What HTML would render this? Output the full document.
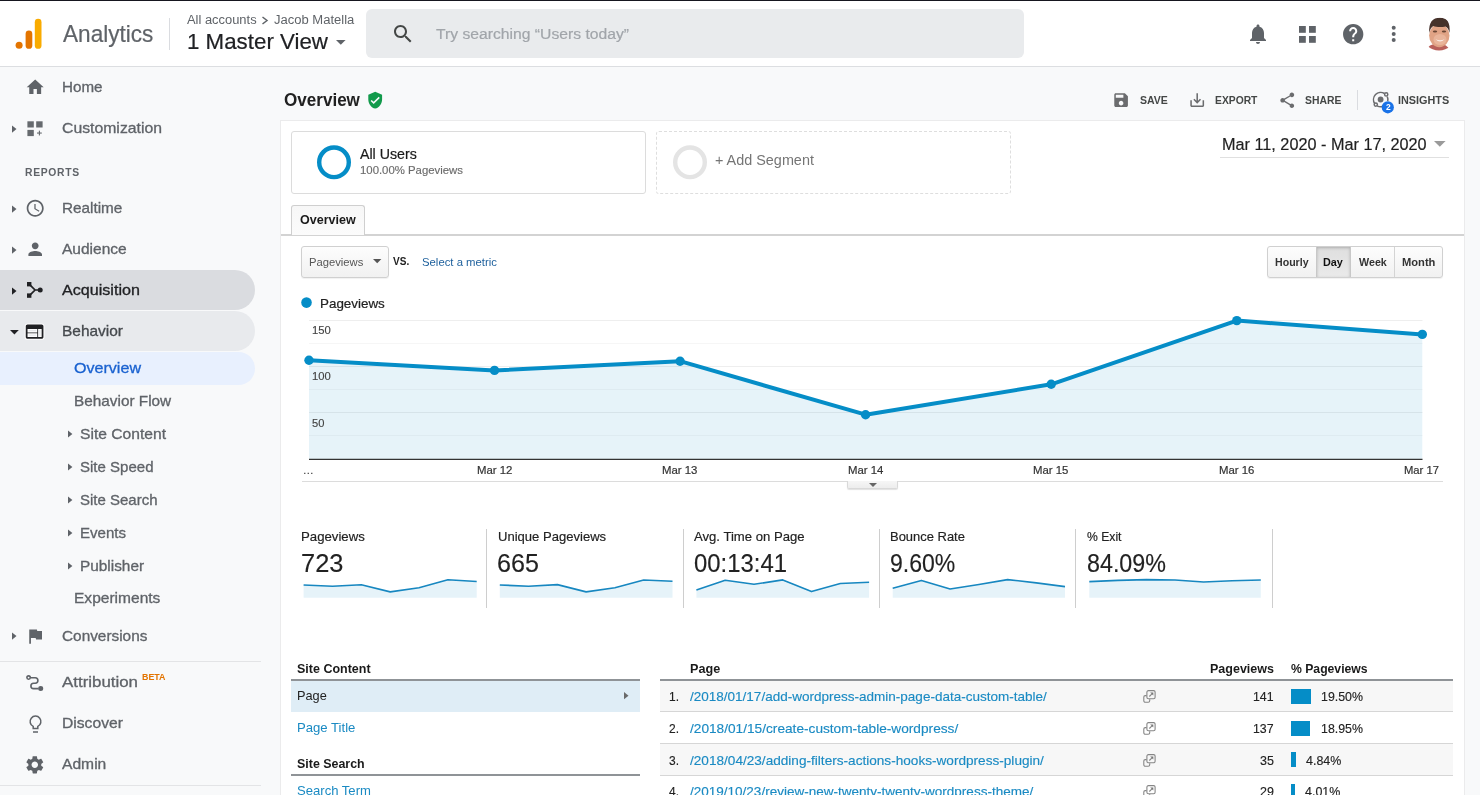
<!DOCTYPE html>
<html lang="en"><head><meta charset="utf-8"><title>Analytics - Behavior Overview</title>
<style>
*{box-sizing:border-box;margin:0;padding:0}
html,body{width:1480px;height:795px;overflow:hidden;background:#f8f9fa;font-family:"Liberation Sans",Arial,sans-serif}
body{position:relative}
.abs,.t,svg.i{position:absolute}
.t{white-space:nowrap;line-height:1;transform-origin:0 50%;display:block}
svg.i{display:block;overflow:visible}
#topline{left:0;top:0;width:1480px;height:1px;background:#16161f}
#header{left:0;top:1px;width:1480px;height:66px;background:#fff;border-bottom:1px solid #dcdee1}
#search{left:366px;top:8px;width:658px;height:49px;background:#e9ebed;border-radius:6px}
#sidebar{left:0;top:67px;width:262px;height:728px;background:#f8f9fa}
.pill{left:0;width:255px;border-radius:0 20px 20px 0}
.hr{height:1px;background:#e3e4e6}
#card{left:280px;top:120px;width:1185px;height:700px;background:#fff;border:1px solid #ebebec}
</style></head><body>

<div class="abs" id="topline"></div>
<header>
<div class="abs" id="header">
<svg class="i" style="left:14px;top:16px" width="30" height="34" viewBox="14 17 30 34">
<rect x="34.8" y="18.8" width="6.7" height="30" rx="3.35" fill="#f9ab00"/>
<rect x="25.6" y="30.6" width="6.7" height="18.2" rx="3.35" fill="#e37400"/>
<circle cx="19.1" cy="45.3" r="3.5" fill="#e37400"/></svg>
<div class="abs" style="left:169px;top:17px;width:1px;height:32px;background:#dadce0"></div>
<div class="abs" id="search"></div>
</div>
<span class="t " style="left:62.60px;top:23.00px;font-size:23.7px;color:#5f6368;-webkit-text-stroke:0.2px #5f6368;transform:scaleX(0.9536);">Analytics</span>
<span class="t " style="left:186.60px;top:14.00px;font-size:12.3px;color:#5f6368;transform:scaleX(1.0496);">All accounts</span>
<span class="t " style="left:273.50px;top:14.00px;font-size:12.3px;color:#5f6368;transform:scaleX(1.0583);">Jacob Matella</span>
<svg class="i" style="left:261px;top:15.5px" width="8" height="9" viewBox="0 0 8 9"><path d="M1.5 1 L6 4.5 L1.5 8" fill="none" stroke="#5f6368" stroke-width="1.5"/></svg>
<span class="t " style="left:186.50px;top:31.00px;font-size:21.8px;color:#202124;-webkit-text-stroke:0.2px #202124;transform:scaleX(1.0239);">1 Master View</span>
<svg class="i" style="left:335.6px;top:40px" width="9.6" height="4.8" viewBox="0 0 10 5"><path d="M0 0h10L5 5z" fill="#5f6368"/></svg>
<svg class="i" style="left:390.5px;top:22px" width="24" height="24" viewBox="0 0 24 24"><path fill="#444746" d="M15.5 14h-.79l-.28-.27C15.41 12.59 16 11.11 16 9.5 16 5.91 13.09 3 9.5 3S3 5.91 3 9.5 5.91 16 9.5 16c1.61 0 3.09-.59 4.23-1.57l.27.28v.79l5 4.99L20.49 19l-4.99-5zm-6 0C7.01 14 5 11.99 5 9.5S7.01 5 9.5 5 14 7.01 14 9.5 11.99 14 9.5 14z"/></svg>
<span class="t " style="left:435.50px;top:26.00px;font-size:15.2px;color:#a1a5aa;-webkit-text-stroke:0.2px #a1a5aa;transform:scaleX(1.0331);">Try searching “Users today”</span>
<svg class="i" style="left:1246px;top:22px" width="24" height="24" viewBox="0 0 24 24"><path fill="#5f6368" d="M12 22c1.1 0 2-.9 2-2h-4c0 1.1.89 2 2 2zm6-6v-5c0-3.07-1.64-5.64-4.5-6.32V4c0-.83-.67-1.5-1.5-1.5s-1.5.67-1.5 1.5v.68C7.63 5.36 6 7.92 6 11v5l-2 2v1h16v-1l-2-2z"/></svg>
<svg class="i" style="left:1299px;top:26.2px" width="17" height="17" viewBox="0 0 17 17"><g fill="#5f6368"><rect x="0" y="0" width="6.8" height="6.8"/><rect x="10" y="0" width="6.8" height="6.8"/><rect x="0" y="10" width="6.8" height="6.8"/><rect x="10" y="10" width="6.8" height="6.8"/></g></svg>
<svg class="i" style="left:1340.5px;top:21.7px" width="24.4" height="24.4" viewBox="0 0 24 24"><path fill="#5f6368" d="M12 2C6.48 2 2 6.48 2 12s4.480 10 10 10 10-4.480 10-10S17.520 2 12 2zm1 17h-2v-2h2v2zm2.070-7.750l-.9.920C13.450 12.900 13 13.500 13 15h-2v-.5c0-1.100.450-2.100 1.170-2.830l1.240-1.260c.370-.360.590-.860.590-1.410 0-1.100-.9-2-2-2s-2 .9-2 2H8c0-2.210 1.790-4 4-4s4 1.790 4 4c0 .880-.360 1.680-.930 2.250z"/></svg>
<svg class="i" style="left:1391px;top:25px" width="6" height="18" viewBox="0 0 6 18"><g fill="#5f6368"><circle cx="2.7" cy="2.8" r="2"/><circle cx="2.7" cy="8.9" r="2"/><circle cx="2.7" cy="15" r="2"/></g></svg>
<svg class="i" style="left:1421px;top:12px" width="38" height="44" viewBox="1421 12 38 44">
<defs><filter id="bl" x="-20%" y="-20%" width="140%" height="140%"><feGaussianBlur stdDeviation="0.55"/></filter>
<clipPath id="avc"><circle cx="1439" cy="34" r="16.5"/></clipPath></defs>
<g filter="url(#bl)" clip-path="url(#avc)">
<ellipse cx="1438" cy="50.5" rx="11.2" ry="7" fill="#b9605a"/>
<ellipse cx="1439.3" cy="35.6" rx="10.2" ry="11.6" fill="#e0a385"/>
<ellipse cx="1440" cy="39.5" rx="6.5" ry="5.5" fill="#e9b59b"/>
<path d="M1429.2 33 C1428.6 22 1432.500 17.700 1440 17.700 C1447.200 17.700 1450.400 22 1449.600 33 C1448.800 29.500 1447.800 27.600 1445.500 26.400 C1441.500 27.400 1436.500 27.200 1433.300 26 C1431 27.500 1430 29.500 1429.200 33z" fill="#45302a"/>
<ellipse cx="1435" cy="31.600" rx="2.2" ry="1" fill="#6a4636"/><ellipse cx="1444" cy="31.600" rx="2.2" ry="1" fill="#6a4636"/>
<path d="M1435.600 39.200 Q1440 43.800 1444.600 39.200 Q1440 41.200 1435.600 39.200z" fill="#fbeee8"/>
</g></svg>
</header>
<nav>
<div class="abs" id="sidebar"></div>
<div class="abs pill" style="top:270.3px;height:40.2px;background:#dadce0"></div>
<div class="abs pill" style="top:310.8px;height:40.5px;background:#e8eaed"></div>
<div class="abs pill" style="top:352px;height:33px;border-radius:0 16.5px 16.5px 0;background:#e8f0fe"></div>
<div class="abs hr" style="left:0;top:661px;width:261px"></div>
<div class="abs hr" style="left:0;top:785px;width:261px"></div>
<svg class="i" style="left:24.7px;top:76.8px" width="20.4" height="20.4" viewBox="0 0 24 24"><path fill="#5f6368" d="M10 20v-6h4v6h5v-8h3L12 3 2 12h3v8z"/></svg>
<span class="t " style="left:61.80px;top:80.00px;font-size:14.4px;color:#5f6368;-webkit-text-stroke:0.3px #5f6368;transform:scaleX(1.0549);">Home</span>
<svg class="i" style="left:12.3px;top:124.5px" width="4.5" height="8.2" viewBox="0 0 5 8"><path d="M0 0L5 4L0 8z" fill="#5f6368"/></svg>
<svg class="i" style="left:27px;top:120.8px" width="16" height="16" viewBox="0 0 16 16"><g fill="#666a6e"><rect x=".4" y=".3" width="6.400" height="6.2"/><rect x="9.2" y=".3" width="6.400" height="6.200"/><rect x=".4" y="8.900" width="6.400" height="6.200"/><rect x="10" y="11.500" width="4.800" height="1.100"/><rect x="11.850" y="9.650" width="1.100" height="4.800"/></g></svg>
<span class="t " style="left:61.80px;top:121.00px;font-size:14.4px;color:#5f6368;-webkit-text-stroke:0.3px #5f6368;transform:scaleX(1.0966);">Customization</span>
<span class="t " style="left:24.60px;top:167.00px;font-size:10.8px;color:#5f6368;font-weight:700;letter-spacing:0.7px;transform:scaleX(0.9581);">REPORTS</span>
<svg class="i" style="left:12.3px;top:204.5px" width="4.5" height="8.2" viewBox="0 0 5 8"><path d="M0 0L5 4L0 8z" fill="#5f6368"/></svg>
<svg class="i" style="left:24.9px;top:197.9px" width="20.4" height="20.4" viewBox="0 0 24 24"><path fill="#5f6368" d="M11.99 2C6.47 2 2 6.48 2 12s4.47 10 9.99 10C17.52 22 22 17.52 22 12S17.52 2 11.99 2zM12 20c-4.42 0-8-3.580-8-8s3.580-8 8-8 8 3.580 8 8-3.580 8-8 8zm.5-13H11v6l5.250 3.150.75-1.230-4.5-2.670z"/></svg>
<span class="t " style="left:61.80px;top:201.00px;font-size:14.4px;color:#5f6368;-webkit-text-stroke:0.3px #5f6368;transform:scaleX(1.0634);">Realtime</span>
<svg class="i" style="left:12.3px;top:245.5px" width="4.5" height="8.2" viewBox="0 0 5 8"><path d="M0 0L5 4L0 8z" fill="#5f6368"/></svg>
<svg class="i" style="left:24.7px;top:239.3px" width="20.4" height="20.4" viewBox="0 0 24 24"><path fill="#5f6368" d="M12 12c2.210 0 4-1.790 4-4s-1.790-4-4-4-4 1.790-4 4 1.790 4 4 4zm0 2c-2.670 0-8 1.340-8 4v2h16v-2c0-2.660-5.330-4-8-4z"/></svg>
<span class="t " style="left:61.80px;top:242.00px;font-size:14.4px;color:#5f6368;-webkit-text-stroke:0.3px #5f6368;transform:scaleX(1.0781);">Audience</span>
<svg class="i" style="left:12.3px;top:286.5px" width="4.5" height="8.2" viewBox="0 0 5 8"><path d="M0 0L5 4L0 8z" fill="#202124"/></svg>
<svg class="i" style="left:27px;top:282.3px" width="16" height="16" viewBox="0 0 16 16"><g fill="#202124" stroke="none">
<rect x="0" y="0" width="4.4" height="4.4"/><rect x="0" y="11.4" width="4.4" height="4.400"/><circle cx="13.2" cy="8" r="2.5"/></g>
<path d="M2.2 2.2 L8 8 L2.2 13.8 M8 8 H13" fill="none" stroke="#202124" stroke-width="1.7"/></svg>
<span class="t " style="left:61.80px;top:283.00px;font-size:14.4px;color:#202124;-webkit-text-stroke:0.3px #202124;transform:scaleX(1.1194);">Acquisition</span>
<svg class="i" style="left:10.2px;top:329.7px" width="8.8" height="4.4" viewBox="0 0 10 5"><path d="M0 0h10L5 5z" fill="#202124"/></svg>
<svg class="i" style="left:24.4px;top:320.8px" width="21.2" height="21.2" viewBox="0 0 24 24"><path fill="#202124" stroke="#fff" stroke-opacity=".85" stroke-width="2.6" paint-order="stroke" stroke-linejoin="round" d="M20 4H4c-1.100 0-1.990.9-1.990 2L2 18c0 1.100.9 2 2 2h16c1.100 0 2-.9 2-2V6c0-1.100-.9-2-2-2zm-5 14H4v-4h11v4zm0-5H4V9h11v4zm5 5h-4V9h4v9z"/></svg>
<span class="t " style="left:61.80px;top:324.00px;font-size:14.4px;color:#45494d;-webkit-text-stroke:0.3px #45494d;transform:scaleX(1.0740);">Behavior</span>
<span class="t " style="left:74.00px;top:361.00px;font-size:14.4px;color:#1a62d0;-webkit-text-stroke:0.3px #1a62d0;transform:scaleX(1.1170);">Overview</span>
<span class="t " style="left:74.00px;top:394.00px;font-size:14.4px;color:#5f6368;-webkit-text-stroke:0.3px #5f6368;transform:scaleX(1.0659);">Behavior Flow</span>
<svg class="i" style="left:68px;top:430.2px" width="4.4" height="8.2" viewBox="0 0 5 8"><path d="M0 0L5 4L0 8z" fill="#5f6368"/></svg>
<span class="t " style="left:80.10px;top:427.00px;font-size:14.4px;color:#5f6368;-webkit-text-stroke:0.3px #5f6368;transform:scaleX(1.0858);">Site Content</span>
<svg class="i" style="left:68px;top:463.0px" width="4.4" height="8.2" viewBox="0 0 5 8"><path d="M0 0L5 4L0 8z" fill="#5f6368"/></svg>
<span class="t " style="left:80.10px;top:460.00px;font-size:14.4px;color:#5f6368;-webkit-text-stroke:0.3px #5f6368;transform:scaleX(1.0437);">Site Speed</span>
<svg class="i" style="left:68px;top:496.2px" width="4.4" height="8.2" viewBox="0 0 5 8"><path d="M0 0L5 4L0 8z" fill="#5f6368"/></svg>
<span class="t " style="left:80.10px;top:493.00px;font-size:14.4px;color:#5f6368;-webkit-text-stroke:0.3px #5f6368;transform:scaleX(1.0416);">Site Search</span>
<svg class="i" style="left:68px;top:529.1px" width="4.4" height="8.2" viewBox="0 0 5 8"><path d="M0 0L5 4L0 8z" fill="#5f6368"/></svg>
<span class="t " style="left:80.10px;top:526.00px;font-size:14.4px;color:#5f6368;-webkit-text-stroke:0.3px #5f6368;transform:scaleX(1.0477);">Events</span>
<svg class="i" style="left:68px;top:562.0px" width="4.4" height="8.2" viewBox="0 0 5 8"><path d="M0 0L5 4L0 8z" fill="#5f6368"/></svg>
<span class="t " style="left:80.10px;top:559.00px;font-size:14.4px;color:#5f6368;-webkit-text-stroke:0.3px #5f6368;transform:scaleX(1.0683);">Publisher</span>
<span class="t " style="left:74.00px;top:591.00px;font-size:14.4px;color:#5f6368;-webkit-text-stroke:0.3px #5f6368;transform:scaleX(1.0802);">Experiments</span>
<svg class="i" style="left:12.3px;top:632.4px" width="4.5" height="8.2" viewBox="0 0 5 8"><path d="M0 0L5 4L0 8z" fill="#5f6368"/></svg>
<svg class="i" style="left:24.6px;top:626.0px" width="20.4" height="20.4" viewBox="0 0 24 24"><path fill="#5f6368" d="M14.4 6L14 4H5v17h2v-7h5.600l.4 2h7V6z"/></svg>
<span class="t " style="left:61.80px;top:629.00px;font-size:14.4px;color:#5f6368;-webkit-text-stroke:0.3px #5f6368;transform:scaleX(1.0675);">Conversions</span>
<svg class="i" style="left:26.4px;top:674.6px" width="17.6" height="16" viewBox="0 0 17.6 16"><g fill="none" stroke="#5f6368" stroke-width="1.6">
<circle cx="2.6" cy="2.6" r="1.7"/><path d="M4.4 2.8 H9.2 A2.7 2.7 0 0 1 9.2 8.2 H7.6 A2.7 2.7 0 0 0 7.600 13.6 H12.5"/></g><circle cx="14.7" cy="13.4" r="2.5" fill="#5f6368"/></svg>
<span class="t " style="left:61.80px;top:675.00px;font-size:14.4px;color:#5f6368;-webkit-text-stroke:0.3px #5f6368;transform:scaleX(1.1729);">Attribution</span>
<span class="t " style="left:141.70px;top:673.00px;font-size:8.8px;color:#e37400;font-weight:700;transform:scaleX(1.0087);">BETA</span>
<svg class="i" style="left:28.5px;top:715.5px" width="13" height="17" viewBox="0 0 13 17"><g fill="none" stroke="#5f6368" stroke-width="1.5">
<path d="M4.2 12.6 V10.4 A5.4 5.4 0 1 1 8.8 10.400 V12.600 Z"/><path d="M4 16 H9"/></g></svg>
<span class="t " style="left:61.80px;top:716.00px;font-size:14.4px;color:#5f6368;-webkit-text-stroke:0.3px #5f6368;transform:scaleX(1.0878);">Discover</span>
<svg class="i" style="left:24.3px;top:754.0px" width="21.6" height="21.6" viewBox="0 0 24 24"><path fill="#5f6368" d="M19.140 12.940c.040-.3.060-.610.060-.940 0-.320-.020-.640-.070-.940l2.030-1.580c.180-.140.230-.410.120-.610l-1.920-3.320c-.120-.220-.370-.290-.590-.220l-2.390.960c-.5-.380-1.030-.7-1.620-.940l-.360-2.540c-.040-.240-.240-.410-.480-.410h-3.840c-.240 0-.430.170-.470.410l-.360 2.540c-.590.240-1.130.570-1.620.940l-2.390-.960c-.220-.080-.470 0-.590.220L2.740 8.870c-.120.210-.080.470.120.610l2.030 1.580c-.050.3-.090.630-.090.940s.020.640.070.940l-2.030 1.580c-.180.140-.230.410-.120.610l1.920 3.320c.120.220.370.290.590.220l2.390-.960c.5.380 1.030.7 1.620.940l.360 2.540c.050.240.240.410.480.410h3.840c.240 0 .440-.170.470-.410l.360-2.540c.590-.240 1.130-.560 1.620-.940l2.390.960c.220.080.470 0 .590-.220l1.920-3.320c.120-.220.070-.470-.120-.610l-2.010-1.580zM12 15.600c-1.980 0-3.600-1.620-3.600-3.600s1.620-3.600 3.600-3.600 3.600 1.620 3.600 3.600-1.620 3.600-3.600 3.600z"/></svg>
<span class="t " style="left:61.80px;top:757.00px;font-size:14.4px;color:#5f6368;-webkit-text-stroke:0.3px #5f6368;transform:scaleX(1.0859);">Admin</span>
</nav>
<main>
<span class="t " style="left:283.50px;top:91.00px;font-size:18.5px;color:#212121;font-weight:700;transform:scaleX(0.9224);">Overview</span>
<svg class="i" style="left:365.6px;top:90.6px" width="18.4" height="18.4" viewBox="0 0 24 24"><path fill="#129a4b" d="M12 1L3 5v6c0 5.550 3.840 10.740 9 12 5.160-1.260 9-6.450 9-12V5l-9-4zm-2 16l-4-4 1.410-1.410L10 14.170l6.590-6.590L18 9l-8 8z"/></svg>
<svg class="i" style="left:1112.3px;top:90.6px" width="18.2" height="18.2" viewBox="0 0 24 24"><path fill="#6b6c6e" d="M17 3H5c-1.110 0-2 .9-2 2v14c0 1.100.890 2 2 2h14c1.100 0 2-.9 2-2V7l-4-4zm-5 16c-1.660 0-3-1.340-3-3s1.340-3 3-3 3 1.340 3 3-1.340 3-3 3zm3-10H5V5h10v4z"/></svg>
<span class="t " style="left:1139.60px;top:95.00px;font-size:11.3px;color:#444746;font-weight:700;transform:scaleX(0.9319);">SAVE</span>
<svg class="i" style="left:1187.9px;top:90.7px" width="18.4" height="18.4" viewBox="0 0 24 24"><path fill="#6b6c6e" d="M19 12v7H5v-7H3v7c0 1.100.9 2 2 2h14c1.100 0 2-.9 2-2v-7h-2zm-6 .670l2.590-2.580L17 11.500l-5 5-5-5 1.410-1.410L11 12.670V3h2z"/></svg>
<span class="t " style="left:1214.60px;top:95.00px;font-size:11.3px;color:#444746;font-weight:700;transform:scaleX(0.9127);">EXPORT</span>
<svg class="i" style="left:1277.6px;top:90.6px" width="18.5" height="18.5" viewBox="0 0 24 24"><path fill="#6b6c6e" d="M18 16.080c-.760 0-1.440.3-1.960.770L8.910 12.700c.050-.230.090-.460.090-.7s-.040-.470-.090-.7l7.050-4.110c.540.5 1.250.810 2.040.810 1.660 0 3-1.340 3-3s-1.340-3-3-3-3 1.340-3 3c0 .240.040.470.090.7L8.040 9.810C7.500 9.310 6.790 9 6 9c-1.660 0-3 1.340-3 3s1.340 3 3 3c.790 0 1.500-.310 2.040-.810l7.120 4.160c-.050.210-.080.430-.080.650 0 1.610 1.310 2.920 2.920 2.920 1.610 0 2.920-1.310 2.920-2.920s-1.310-2.920-2.920-2.920z"/></svg>
<span class="t " style="left:1304.60px;top:95.00px;font-size:11.3px;color:#444746;font-weight:700;transform:scaleX(0.9204);">SHARE</span>
<div class="abs" style="left:1357px;top:90px;width:1px;height:20px;background:#dadce0"></div>
<svg class="i" style="left:1372px;top:90px" width="22" height="24" viewBox="0 0 22 24"><g fill="none" stroke="#6b6c6e" stroke-width="1.5">
<path d="M12.5 3.500 A7.2 7.2 0 0 0 2.700 13.600"/><path d="M5.100 15.800 A7.200 7.200 0 0 0 12.200 15.740"/><path d="M15.300 6.600 A7.200 7.200 0 0 1 15.700 11"/>
<circle cx="14.2" cy="4.400" r="1.600"/><circle cx="3.800" cy="14.600" r="1.600"/></g>
<circle cx="8.6" cy="9.5" r="2.900" fill="#6b6c6e"/>
<circle cx="15.800" cy="17.3" r="6.100" fill="#1a73e8"/></svg>
<span class="t " style="left:1385.50px;top:103.00px;font-size:8.6px;color:#fff;font-weight:700;transform:scaleX(0.9830);">2</span>
<span class="t " style="left:1398.20px;top:95.00px;font-size:11.3px;color:#444746;font-weight:700;transform:scaleX(0.9595);">INSIGHTS</span>
<div class="abs" id="card"></div>
<div class="abs" style="left:291px;top:131px;width:355px;height:63px;border:1px solid #dcdcdc;border-radius:3px;background:#fff"></div>
<svg class="i" style="left:316px;top:144px" width="36" height="36" viewBox="0 0 36 36"><circle cx="18" cy="18.300" r="14.8" fill="none" stroke="#058dc7" stroke-width="4.4"/></svg>
<span class="t " style="left:359.60px;top:147.00px;font-size:14.4px;color:#1a1a1a;-webkit-text-stroke:0.2px #1a1a1a;transform:scaleX(0.9865);">All Users</span>
<span class="t " style="left:359.80px;top:165.00px;font-size:11.4px;color:#6b6b6b;-webkit-text-stroke:0.15px #6b6b6b;transform:scaleX(0.9979);">100.00% Pageviews</span>
<div class="abs" style="left:656px;top:131px;width:355px;height:63px;border:1px dashed #dedede;border-radius:3px;background:#fff"></div>
<svg class="i" style="left:672px;top:144px" width="36" height="36" viewBox="0 0 36 36"><circle cx="18" cy="18.300" r="14.8" fill="none" stroke="#e4e4e4" stroke-width="4.4"/></svg>
<span class="t " style="left:714.60px;top:153.00px;font-size:14.4px;color:#757575;transform:scaleX(1.0009);">+ Add Segment</span>
<span class="t " style="left:1221.70px;top:137.00px;font-size:16.8px;color:#1f1f1f;-webkit-text-stroke:0.2px #1f1f1f;transform:scaleX(0.9677);">Mar 11, 2020 - Mar 17, 2020</span>
<svg class="i" style="left:1433.5px;top:141.3px" width="11.600" height="5.800" viewBox="0 0 10 5"><path d="M0 0h10L5 5z" fill="#9a9a9a"/></svg>
<div class="abs" style="left:1220px;top:157px;width:229px;height:1px;background:#e0e0e0"></div>
<div class="abs" style="left:281px;top:234.2px;width:1183px;height:1.5px;background:#d3d3d3"></div>
<div class="abs" style="left:291px;top:205px;width:74px;height:30px;border:1px solid #cfcfcf;border-bottom:0;border-radius:3px 3px 0 0;background:linear-gradient(#f7f7f7,#fbfbfb)"></div>
<span class="t " style="left:299.80px;top:214.00px;font-size:12.2px;color:#1a1a1a;font-weight:700;transform:scaleX(1.0276);">Overview</span>
<div class="abs" style="left:301px;top:246px;width:88px;height:32px;border:1px solid #d0d0d0;border-radius:3px;background:linear-gradient(#fdfdfd,#f1f1f1);box-shadow:0 1px 1px rgba(0,0,0,.06)"></div>
<span class="t " style="left:309.20px;top:257.00px;font-size:11.2px;color:#555;transform:scaleX(1.0035);">Pageviews</span>
<svg class="i" style="left:373.1px;top:259.4px" width="8.400" height="4.200" viewBox="0 0 10 5"><path d="M0 0h10L5 5z" fill="#555"/></svg>
<span class="t " style="left:393.00px;top:256.00px;font-size:10.6px;color:#222;font-weight:700;transform:scaleX(0.9486);">VS.</span>
<span class="t " style="left:421.80px;top:257.00px;font-size:11.2px;color:#1c5f9c;transform:scaleX(1.0135);">Select a metric</span>
<div class="abs" style="left:1267px;top:246px;width:176px;height:32px;border:1px solid #d0d0d0;border-radius:3px;background:linear-gradient(#fdfdfd,#f1f1f1);box-shadow:0 1px 1px rgba(0,0,0,.06)"></div>
<div class="abs" style="left:1316px;top:247px;width:35px;height:30px;background:linear-gradient(#dedede,#eaeaea);box-shadow:inset 0 1px 3px rgba(0,0,0,.22);border-left:1px solid #c8c8c8;border-right:1px solid #c8c8c8"></div>
<div class="abs" style="left:1394px;top:247px;width:1px;height:30px;background:#d4d4d4"></div>
<span class="t " style="left:1275.20px;top:257.00px;font-size:11.2px;color:#333;font-weight:700;transform:scaleX(0.9481);">Hourly</span>
<span class="t " style="left:1323.40px;top:257.00px;font-size:11.2px;color:#111;font-weight:700;transform:scaleX(0.9693);">Day</span>
<span class="t " style="left:1358.50px;top:257.00px;font-size:11.2px;color:#333;font-weight:700;transform:scaleX(0.9576);">Week</span>
<span class="t " style="left:1401.80px;top:257.00px;font-size:11.2px;color:#333;font-weight:700;transform:scaleX(0.9956);">Month</span>
<svg class="i" style="left:0;top:0" width="1480" height="795" viewBox="0 0 1480 795">
<path d="M309 435.5 H1422.5" stroke="#f6f6f6" stroke-width="1"/>
<path d="M309 412.5 H1422.5" stroke="#eeeeee" stroke-width="1"/>
<path d="M309 389.5 H1422.5" stroke="#f6f6f6" stroke-width="1"/>
<path d="M309 366.5 H1422.5" stroke="#eeeeee" stroke-width="1"/>
<path d="M309 343.5 H1422.5" stroke="#f6f6f6" stroke-width="1"/>
<path d="M309 320.5 H1422.5" stroke="#eeeeee" stroke-width="1"/>
<polygon points="309.0,459 309.0,360.3 494.5,370.4 680.1,361.2 865.6,414.7 1051.2,384.3 1236.8,320.6 1422.3,334.4 1422.3,459" fill="#058dc7" fill-opacity="0.1"/>
<path d="M309 459.4 H1422.5" stroke="#333" stroke-width="1.400"/>
<polyline points="309.0,360.3 494.5,370.4 680.1,361.2 865.6,414.7 1051.2,384.3 1236.8,320.6 1422.3,334.4" fill="none" stroke="#058dc7" stroke-width="4" stroke-linejoin="round"/>
<circle cx="309.0" cy="360.3" r="4.7" fill="#058dc7"/>
<circle cx="494.5" cy="370.4" r="4.7" fill="#058dc7"/>
<circle cx="680.1" cy="361.2" r="4.7" fill="#058dc7"/>
<circle cx="865.6" cy="414.7" r="4.7" fill="#058dc7"/>
<circle cx="1051.2" cy="384.3" r="4.7" fill="#058dc7"/>
<circle cx="1236.8" cy="320.6" r="4.7" fill="#058dc7"/>
<circle cx="1422.3" cy="334.4" r="4.7" fill="#058dc7"/>
<circle cx="306.5" cy="302.6" r="5.3" fill="#058dc7"/>
</svg>
<span class="t " style="left:319.60px;top:297.00px;font-size:13.2px;color:#222;-webkit-text-stroke:0.2px #222;transform:scaleX(1.0160);">Pageviews</span>
<span class="t " style="left:311.60px;top:325.00px;font-size:11.2px;color:#444;-webkit-text-stroke:0.15px #444;transform:scaleX(1.0069);">150</span>
<span class="t " style="left:311.60px;top:371.00px;font-size:11.2px;color:#444;-webkit-text-stroke:0.15px #444;transform:scaleX(1.0069);">100</span>
<span class="t " style="left:311.60px;top:418.00px;font-size:11.2px;color:#444;-webkit-text-stroke:0.15px #444;transform:scaleX(0.9957);">50</span>
<span class="t " style="left:303.40px;top:465.00px;font-size:11.2px;color:#444;transform:scaleX(1.1363);">...</span>
<span class="t " style="left:476.75px;top:465.00px;font-size:11.2px;color:#333;-webkit-text-stroke:0.2px #333;transform:scaleX(1.0164);">Mar 12</span>
<span class="t " style="left:662.30px;top:465.00px;font-size:11.2px;color:#333;-webkit-text-stroke:0.2px #333;transform:scaleX(1.0164);">Mar 13</span>
<span class="t " style="left:847.85px;top:465.00px;font-size:11.2px;color:#333;-webkit-text-stroke:0.2px #333;transform:scaleX(1.0164);">Mar 14</span>
<span class="t " style="left:1033.40px;top:465.00px;font-size:11.2px;color:#333;-webkit-text-stroke:0.2px #333;transform:scaleX(1.0164);">Mar 15</span>
<span class="t " style="left:1218.95px;top:465.00px;font-size:11.2px;color:#333;-webkit-text-stroke:0.2px #333;transform:scaleX(1.0164);">Mar 16</span>
<span class="t " style="left:1404.20px;top:465.00px;font-size:11.2px;color:#333;-webkit-text-stroke:0.2px #333;transform:scaleX(1.0049);">Mar 17</span>
<div class="abs" style="left:302px;top:481px;width:1141px;height:1px;background:#dcdcdc"></div>
<div class="abs" style="left:847px;top:481px;width:51px;height:8px;border:1px solid #d9d9d9;border-top:0;border-radius:0 0 2px 2px;background:linear-gradient(#f6f6f6,#ededed);box-shadow:0 1px 1px rgba(0,0,0,.12)"></div>
<svg class="i" style="left:868.500px;top:482.5px" width="8" height="4" viewBox="0 0 10 5"><path d="M0 0h10L5 5z" fill="#666"/></svg>
<span class="t " style="left:301.00px;top:530.00px;font-size:13.3px;color:#222;-webkit-text-stroke:0.18px #222;transform:scaleX(0.9920);">Pageviews</span>
<span class="t " style="left:300.80px;top:550.00px;font-size:26.5px;color:#222;-webkit-text-stroke:0.15px #222;transform:scaleX(0.9589);">723</span>
<span class="t " style="left:497.50px;top:530.00px;font-size:13.3px;color:#222;-webkit-text-stroke:0.18px #222;transform:scaleX(0.9815);">Unique Pageviews</span>
<span class="t " style="left:497.40px;top:550.00px;font-size:26.5px;color:#222;-webkit-text-stroke:0.15px #222;transform:scaleX(0.9476);">665</span>
<span class="t " style="left:693.70px;top:530.00px;font-size:13.3px;color:#222;-webkit-text-stroke:0.18px #222;transform:scaleX(0.9865);">Avg. Time on Page</span>
<span class="t " style="left:694.20px;top:550.00px;font-size:26.5px;color:#222;-webkit-text-stroke:0.15px #222;transform:scaleX(0.9015);">00:13:41</span>
<span class="t " style="left:890.30px;top:530.00px;font-size:13.3px;color:#222;-webkit-text-stroke:0.18px #222;transform:scaleX(0.9741);">Bounce Rate</span>
<span class="t " style="left:890.40px;top:550.00px;font-size:26.5px;color:#222;-webkit-text-stroke:0.15px #222;transform:scaleX(0.8690);">9.60%</span>
<span class="t " style="left:1086.50px;top:530.00px;font-size:13.3px;color:#222;-webkit-text-stroke:0.18px #222;transform:scaleX(0.9154);">% Exit</span>
<span class="t " style="left:1087.00px;top:550.00px;font-size:26.5px;color:#222;-webkit-text-stroke:0.15px #222;transform:scaleX(0.8788);">84.09%</span>
<svg class="i" style="left:0;top:0" width="1480" height="795" viewBox="0 0 1480 795">
<polygon points="303.6,597.8 303.6,585.0 332.5,586.2 361.3,584.8 390.2,591.9 419.0,587.8 447.9,579.7 476.7,581.5 476.7,597.8" fill="#058dc7" fill-opacity="0.1"/>
<polyline points="303.6,585.0 332.5,586.2 361.3,584.8 390.2,591.9 419.0,587.8 447.9,579.7 476.7,581.5" fill="none" stroke="#1787c0" stroke-width="1.6" stroke-linejoin="round"/>
<polygon points="499.8,597.8 499.8,585.0 528.6,586.2 557.4,584.6 586.1,591.9 614.9,587.8 643.7,580.0 672.5,581.3 672.5,597.8" fill="#058dc7" fill-opacity="0.1"/>
<polyline points="499.8,585.0 528.6,586.2 557.4,584.6 586.1,591.9 614.9,587.8 643.7,580.0 672.5,581.3" fill="none" stroke="#1787c0" stroke-width="1.6" stroke-linejoin="round"/>
<polygon points="696.4,597.8 696.4,590.0 725.2,580.3 754.0,584.3 782.8,579.9 811.5,591.6 840.3,583.5 869.1,582.3 869.1,597.8" fill="#058dc7" fill-opacity="0.1"/>
<polyline points="696.4,590.0 725.2,580.3 754.0,584.3 782.8,579.9 811.5,591.6 840.3,583.5 869.1,582.3" fill="none" stroke="#1787c0" stroke-width="1.6" stroke-linejoin="round"/>
<polygon points="892.7,597.8 892.7,588.2 921.4,580.4 950.1,589.0 978.9,584.5 1007.6,579.6 1036.3,582.9 1065.0,586.6 1065.0,597.8" fill="#058dc7" fill-opacity="0.1"/>
<polyline points="892.7,588.2 921.4,580.4 950.1,589.0 978.9,584.5 1007.6,579.6 1036.3,582.9 1065.0,586.6" fill="none" stroke="#1787c0" stroke-width="1.6" stroke-linejoin="round"/>
<polygon points="1089.3,597.8 1089.3,581.6 1117.9,580.4 1146.5,579.6 1175.0,580.0 1203.6,582.0 1232.2,580.8 1260.8,580.0 1260.8,597.8" fill="#058dc7" fill-opacity="0.1"/>
<polyline points="1089.3,581.6 1117.9,580.4 1146.5,579.6 1175.0,580.0 1203.6,582.0 1232.2,580.8 1260.8,580.0" fill="none" stroke="#1787c0" stroke-width="1.6" stroke-linejoin="round"/>
</svg>
<div class="abs" style="left:486px;top:529px;width:1px;height:78.500px;background:#cecece"></div>
<div class="abs" style="left:682.5px;top:529px;width:1px;height:78.500px;background:#cecece"></div>
<div class="abs" style="left:879px;top:529px;width:1px;height:78.500px;background:#cecece"></div>
<div class="abs" style="left:1075px;top:529px;width:1px;height:78.500px;background:#cecece"></div>
<div class="abs" style="left:1271.5px;top:529px;width:1px;height:78.500px;background:#cecece"></div>
<span class="t " style="left:297.00px;top:663.00px;font-size:12.2px;color:#1a1a1a;font-weight:700;transform:scaleX(1.0253);">Site Content</span>
<div class="abs" style="left:291px;top:679.3px;width:349px;height:1.8px;background:#8f9397"></div>
<div class="abs" style="left:291px;top:681.2px;width:349px;height:30.500px;background:#dfedf6"></div>
<span class="t " style="left:297.30px;top:690.00px;font-size:12.4px;color:#222;transform:scaleX(1.0292);">Page</span>
<svg class="i" style="left:624.3px;top:692.1px" width="4.5" height="7.4" viewBox="0 0 5 8"><path d="M0 0L5 4L0 8z" fill="#6a6a6a"/></svg>
<span class="t " style="left:297.30px;top:722.00px;font-size:12.4px;color:#1a8ac3;transform:scaleX(1.0597);">Page Title</span>
<span class="t " style="left:297.00px;top:758.00px;font-size:12.2px;color:#1a1a1a;font-weight:700;transform:scaleX(1.0197);">Site Search</span>
<div class="abs" style="left:291px;top:774.2px;width:349px;height:1.8px;background:#8f9397"></div>
<span class="t " style="left:297.30px;top:785.00px;font-size:12.4px;color:#1a8ac3;transform:scaleX(1.0555);">Search Term</span>
<span class="t " style="left:690.20px;top:663.00px;font-size:12.2px;color:#1a1a1a;font-weight:700;transform:scaleX(1.0364);">Page</span>
<span class="t " style="left:1210.40px;top:663.00px;font-size:12.2px;color:#1a1a1a;font-weight:700;transform:scaleX(1.0266);">Pageviews</span>
<span class="t " style="left:1291.20px;top:663.00px;font-size:12.2px;color:#1a1a1a;font-weight:700;transform:scaleX(1.0005);">% Pageviews</span>
<div class="abs" style="left:660px;top:679.3px;width:793px;height:1.8px;background:#8f9397"></div>
<div class="abs" style="left:660px;top:681.2px;width:793px;height:30.0px;background:#f7f7f7"></div>
<div class="abs" style="left:660px;top:711.2px;width:793px;height:1px;background:#d6d6d6"></div>
<span class="t " style="left:668.80px;top:690.00px;font-size:13.5px;color:#222;-webkit-text-stroke:0.15px #222;transform:scaleX(0.8877);">1.</span>
<span class="t " style="left:690.00px;top:690.00px;font-size:13.5px;color:#1a8ac3;-webkit-text-stroke:0.15px #1a8ac3;transform:scaleX(1.0010);">/2018/01/17/add-wordpress-admin-page&#45;data-custom-table/</span>
<svg class="i" style="left:1142.5px;top:690.1px" width="13" height="13" viewBox="0 0 13 13"><g fill="none" stroke="#868686" stroke-width="1.1"><rect x="3.9" y=".6" width="8.2" height="8.200" rx="1.5"/><path d="M3.600 5.600 H2.300 A1.500 1.500 0 0 0 .8 7.100 V10.700 A1.500 1.500 0 0 0 2.300 12.200 H5.200 A1.500 1.500 0 0 0 6.700 10.700 V9.200"/><path d="M6.300 6.500 L9 3.800"/></g><path d="M7.200 2.500 H10.300 V5.600 Z" fill="#777"/></svg>
<span class="t " style="left:1253.00px;top:690.00px;font-size:13.5px;color:#222;-webkit-text-stroke:0.15px #222;transform:scaleX(0.9143);">141</span>
<div class="abs" style="left:1291px;top:688.8px;width:19.5px;height:15.100px;background:#058dc7"></div>
<span class="t " style="left:1321.40px;top:690.00px;font-size:13.5px;color:#222;-webkit-text-stroke:0.15px #222;transform:scaleX(0.9171);">19.50%</span>
<div class="abs" style="left:660px;top:712.2px;width:793px;height:31.1px;background:#fff"></div>
<div class="abs" style="left:660px;top:743.3px;width:793px;height:1px;background:#d6d6d6"></div>
<span class="t " style="left:668.80px;top:722.00px;font-size:13.5px;color:#222;-webkit-text-stroke:0.15px #222;transform:scaleX(0.8877);">2.</span>
<span class="t " style="left:690.00px;top:722.00px;font-size:13.5px;color:#1a8ac3;-webkit-text-stroke:0.15px #1a8ac3;transform:scaleX(1.0125);">/2018/01/15/create-custom-table-wordpress/</span>
<svg class="i" style="left:1142.5px;top:721.9px" width="13" height="13" viewBox="0 0 13 13"><g fill="none" stroke="#868686" stroke-width="1.1"><rect x="3.9" y=".6" width="8.2" height="8.200" rx="1.5"/><path d="M3.600 5.600 H2.300 A1.500 1.500 0 0 0 .8 7.100 V10.700 A1.500 1.500 0 0 0 2.300 12.200 H5.200 A1.500 1.500 0 0 0 6.700 10.700 V9.200"/><path d="M6.300 6.500 L9 3.800"/></g><path d="M7.200 2.500 H10.300 V5.600 Z" fill="#777"/></svg>
<span class="t " style="left:1253.00px;top:722.00px;font-size:13.5px;color:#222;-webkit-text-stroke:0.15px #222;transform:scaleX(0.9143);">137</span>
<div class="abs" style="left:1291px;top:720.5px;width:18.9px;height:15.100px;background:#058dc7"></div>
<span class="t " style="left:1321.00px;top:722.00px;font-size:13.5px;color:#222;-webkit-text-stroke:0.15px #222;transform:scaleX(0.9171);">18.95%</span>
<div class="abs" style="left:660px;top:744.3px;width:793px;height:30.7px;background:#f7f7f7"></div>
<div class="abs" style="left:660px;top:775.0px;width:793px;height:1px;background:#d6d6d6"></div>
<span class="t " style="left:668.80px;top:754.00px;font-size:13.5px;color:#222;-webkit-text-stroke:0.15px #222;transform:scaleX(0.8877);">3.</span>
<span class="t " style="left:690.00px;top:754.00px;font-size:13.5px;color:#1a8ac3;-webkit-text-stroke:0.15px #1a8ac3;transform:scaleX(1.0077);">/2018/04/23/adding-filters-actions-hooks-wordpress-plugin/</span>
<svg class="i" style="left:1142.5px;top:753.6px" width="13" height="13" viewBox="0 0 13 13"><g fill="none" stroke="#868686" stroke-width="1.1"><rect x="3.9" y=".6" width="8.2" height="8.200" rx="1.5"/><path d="M3.600 5.600 H2.300 A1.500 1.500 0 0 0 .8 7.100 V10.700 A1.500 1.500 0 0 0 2.300 12.200 H5.200 A1.500 1.500 0 0 0 6.700 10.700 V9.200"/><path d="M6.300 6.500 L9 3.800"/></g><path d="M7.200 2.500 H10.300 V5.600 Z" fill="#777"/></svg>
<span class="t " style="left:1259.70px;top:754.00px;font-size:13.5px;color:#222;-webkit-text-stroke:0.15px #222;transform:scaleX(0.9247);">35</span>
<div class="abs" style="left:1291px;top:752.3px;width:4.5px;height:15.100px;background:#058dc7"></div>
<span class="t " style="left:1306.00px;top:754.00px;font-size:13.5px;color:#222;-webkit-text-stroke:0.15px #222;transform:scaleX(0.9221);">4.84%</span>
<div class="abs" style="left:660px;top:776.0px;width:793px;height:31.0px;background:#fff"></div>
<div class="abs" style="left:660px;top:807.0px;width:793px;height:1px;background:#d6d6d6"></div>
<span class="t " style="left:668.80px;top:785.00px;font-size:13.5px;color:#222;-webkit-text-stroke:0.15px #222;transform:scaleX(0.8877);">4.</span>
<span class="t " style="left:690.00px;top:785.00px;font-size:13.5px;color:#1a8ac3;-webkit-text-stroke:0.15px #1a8ac3;transform:scaleX(1.0009);">/2019/10/23/review-new-twenty-twenty-wordpress-theme/</span>
<svg class="i" style="left:1142.5px;top:785.4px" width="13" height="13" viewBox="0 0 13 13"><g fill="none" stroke="#868686" stroke-width="1.1"><rect x="3.9" y=".6" width="8.2" height="8.200" rx="1.5"/><path d="M3.600 5.600 H2.300 A1.500 1.500 0 0 0 .8 7.100 V10.700 A1.500 1.500 0 0 0 2.300 12.200 H5.200 A1.500 1.500 0 0 0 6.700 10.700 V9.200"/><path d="M6.300 6.500 L9 3.800"/></g><path d="M7.200 2.500 H10.300 V5.600 Z" fill="#777"/></svg>
<span class="t " style="left:1259.70px;top:785.00px;font-size:13.5px;color:#222;-webkit-text-stroke:0.15px #222;transform:scaleX(0.9247);">29</span>
<div class="abs" style="left:1291px;top:784.0px;width:3.9px;height:15.100px;background:#058dc7"></div>
<span class="t " style="left:1305.20px;top:785.00px;font-size:13.5px;color:#222;-webkit-text-stroke:0.15px #222;transform:scaleX(0.9221);">4.01%</span>
</main>
</body></html>
